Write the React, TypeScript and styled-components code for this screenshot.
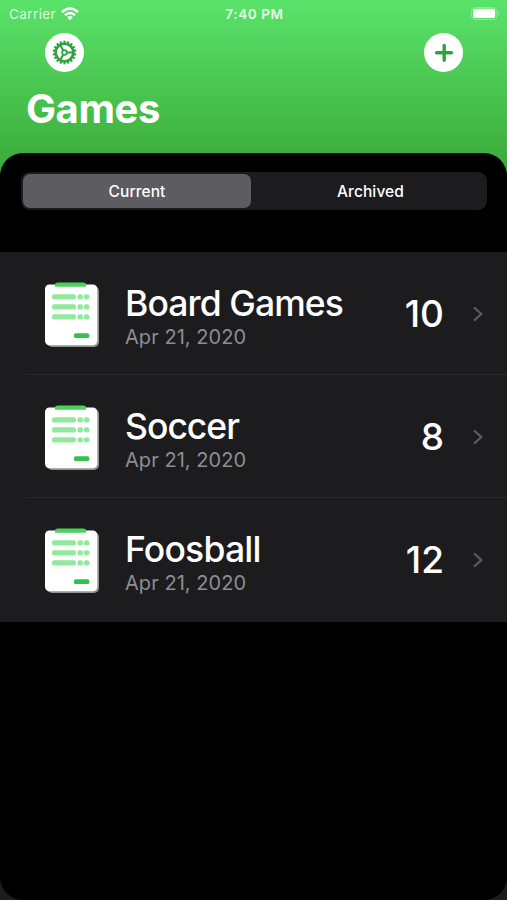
import React from "react";
import styled, { createGlobalStyle } from "styled-components";

const GlobalStyle = createGlobalStyle`
  *, *::before, *::after { box-sizing: border-box; }
  body { margin: 0; background: #1c1c1e; }
`;

const Screen = styled.main`
  width: 507px;
  height: 900px;
  display: flex;
  flex-direction: column;
  overflow: hidden;
  font-family: Inter, "Liberation Sans", sans-serif;
  color: #fff;
  background: linear-gradient(#5ae36a 0, #3aa938 174px, #1c1c1e 174px);
`;

const StatusBar = styled.div`
  height: 28px;
  display: grid;
  grid-template-columns: 1fr auto 1fr;
  align-items: center;
  padding: 0 7px 0 9px;
  font-size: 13px;
  line-height: 28px;
`;

const Carrier = styled.div`
  display: flex;
  align-items: center;
  gap: 5px;
  color: #dcf9df;
  font-size: 13.5px;
  letter-spacing: 0.4px;
`;

const Clock = styled.div`
  font-size: 13.5px;
  font-weight: 600;
  letter-spacing: 0.6px;
  color: #e6fbe8;
`;

const BatteryIcon = styled.svg`
  justify-self: end;
  display: block;
`;

const Toolbar = styled.nav`
  height: 48px;
  padding: 5px 44px 0 45px;
  display: flex;
  justify-content: space-between;
`;

const RoundButton = styled.button`
  width: 39px;
  height: 39px;
  padding: 0;
  border: 0;
  border-radius: 50%;
  background: #fff;
  display: grid;
  place-items: center;
  svg { display: block; }
`;

const Heading = styled.h1`
  height: 76.5px;
  margin: 0;
  padding: 8px 0 0 26px;
  font-size: 40px;
  line-height: 50px;
  font-weight: 700;
  letter-spacing: -0.4px;
`;

const Sheet = styled.section`
  flex: 1;
  background: #000;
  border-radius: 23px;
  overflow: hidden;
`;

const Segments = styled.div`
  height: 38px;
  margin: 19.5px 20px 42px 21px;
  padding: 2px;
  display: grid;
  grid-template-columns: 228px 1fr;
  border-radius: 9px;
  background: #1c1c1e;
`;

const Segment = styled.button<{ $active?: boolean }>`
  border: 0;
  padding: 2px 0 0 ${({ $active }) => ($active ? "0" : "5px")};
  border-radius: 7px;
  font: 500 15.5px/32px Inter, "Liberation Sans", sans-serif;
  letter-spacing: 0.1px;
  color: #fff;
  background: ${({ $active }) => ($active ? "#5d5c61" : "transparent")};
`;

const GameList = styled.ul`
  list-style: none;
  margin: 0;
  padding: 0 0 1px;
  background: #1c1c1e;
`;

const GameRow = styled.li`
  height: 123px;
  padding: 0 23px 0 44px;
  display: flex;
  align-items: center;
  background: linear-gradient(#29292b, #29292b) 25px 100% / 100% 1px no-repeat;
  &:last-child { background: none; }
`;

const Details = styled.div`
  flex: 1;
  margin-left: 25px;
  padding-top: 6px;
`;

const GameName = styled.div<{ $tracking: number }>`
  font-size: 35.5px;
  line-height: 40px;
  font-weight: 500;
  letter-spacing: ${({ $tracking }) => $tracking}px;
`;

const GameDate = styled.div`
  font-size: 20px;
  line-height: 26px;
  color: #8d8d92;
  letter-spacing: 0.05px;
`;

const Score = styled.div`
  font-size: 37px;
  line-height: 44px;
  font-weight: 500;
  margin-right: 28px;
  padding-top: 1px;
`;

const Wifi = () => (
  <svg width="18" height="14" viewBox="0 0 18 14" fill="none" stroke="#fff" strokeWidth="2.4">
    <path d="M1 5.2Q9-2 17 5.2M3.9 8.2Q9 3.8 14.1 8.2" />
    <path d="M6.1 10.2Q9 7.8 11.9 10.2L9 13.2Z" fill="#fff" stroke="none" />
  </svg>
);

const Battery = () => (
  <BatteryIcon width="29" height="14" viewBox="0 0 29 14">
    <rect x="0.6" y="0.5" width="25.2" height="12" rx="3.5" fill="none" stroke="#8aec95" />
    <rect x="2" y="1.8" width="22.2" height="9.3" rx="2.2" fill="#fff" />
    <path d="M27.2 4.6q1.6 2 0 4Z" fill="#a3f0aa" />
  </BatteryIcon>
);

const teeth = Array.from({ length: 18 }, (_, i) => i * 20);

const Gear = () => (
  <svg width="26" height="26" viewBox="-12.5 -12.5 26 26" fill="none" stroke="#31a143">
    {teeth.map((angle) => (
      <path key={angle} d="M0-9.5V-11.9" strokeWidth="2" transform={`rotate(${angle})`} />
    ))}
    <circle r="8.9" strokeWidth="2.8" />
    <circle r="2.4" strokeWidth="1.7" />
    <path d="M2.4 0H9M-1.2-2.1L-4.6-8M-1.2 2.1L-4.6 8" strokeWidth="2.1" />
  </svg>
);

const Plus = () => (
  <svg width="20" height="20" viewBox="0 0 20 20" stroke="#31a143" strokeWidth="3.4" strokeLinecap="round">
    <path d="M10.2 2.4V17.2M2.6 9.8H17.4" />
  </svg>
);

const ScoreCard = () => (
  <svg width="56" height="66" viewBox="0 -1 56 66">
    <rect x="3" y="4" width="52" height="61" rx="5" fill="#929296" />
    <rect x="1" y="2.5" width="52.3" height="60.7" rx="4.5" fill="#fff" />
    <path d="M11 4.8V3q0-2.4 3-2.4H39q3 0 3 2.4V4.8Z" fill="#4bd15c" />
    {[12.2, 22.2, 32.2].map((y) => (
      <g key={y} fill="#91e99d">
        <rect x="8" y={y} width="24" height="5.4" rx="2" />
        <rect x="33.4" y={y} width="5.6" height="5.4" rx="2.3" />
        <rect x="39.8" y={y} width="5.6" height="5.4" rx="2.3" />
      </g>
    ))}
    <rect x="30" y="51.3" width="15.3" height="4.7" rx="1.6" fill="#36c04d" />
  </svg>
);

const Chevron = () => (
  <svg width="12" height="16" viewBox="0 0 12 16" fill="none" stroke="#5b5b5f" strokeWidth="2.2">
    <path d="M2 1.4L9.3 8L2 14.6" />
  </svg>
);

const games = [
  { name: "Board Games", date: "Apr 21, 2020", score: 10, tracking: -0.9 },
  { name: "Soccer", date: "Apr 21, 2020", score: 8, tracking: -1 },
  { name: "Foosball", date: "Apr 21, 2020", score: 12, tracking: -0.8 },
];

export default function App() {
  return (
    <>
      <GlobalStyle />
      <Screen>
        <StatusBar>
          <Carrier>Carrier<Wifi /></Carrier>
          <Clock>7:40 PM</Clock>
          <Battery />
        </StatusBar>
        <Toolbar>
          <RoundButton aria-label="Settings"><Gear /></RoundButton>
          <RoundButton aria-label="Add game"><Plus /></RoundButton>
        </Toolbar>
        <Heading>Games</Heading>
        <Sheet>
          <Segments>
            <Segment $active>Current</Segment>
            <Segment>Archived</Segment>
          </Segments>
          <GameList>
            {games.map((game) => (
              <GameRow key={game.name}>
                <ScoreCard />
                <Details>
                  <GameName $tracking={game.tracking}>{game.name}</GameName>
                  <GameDate>{game.date}</GameDate>
                </Details>
                <Score>{game.score}</Score>
                <Chevron />
              </GameRow>
            ))}
          </GameList>
        </Sheet>
      </Screen>
    </>
  );
}
